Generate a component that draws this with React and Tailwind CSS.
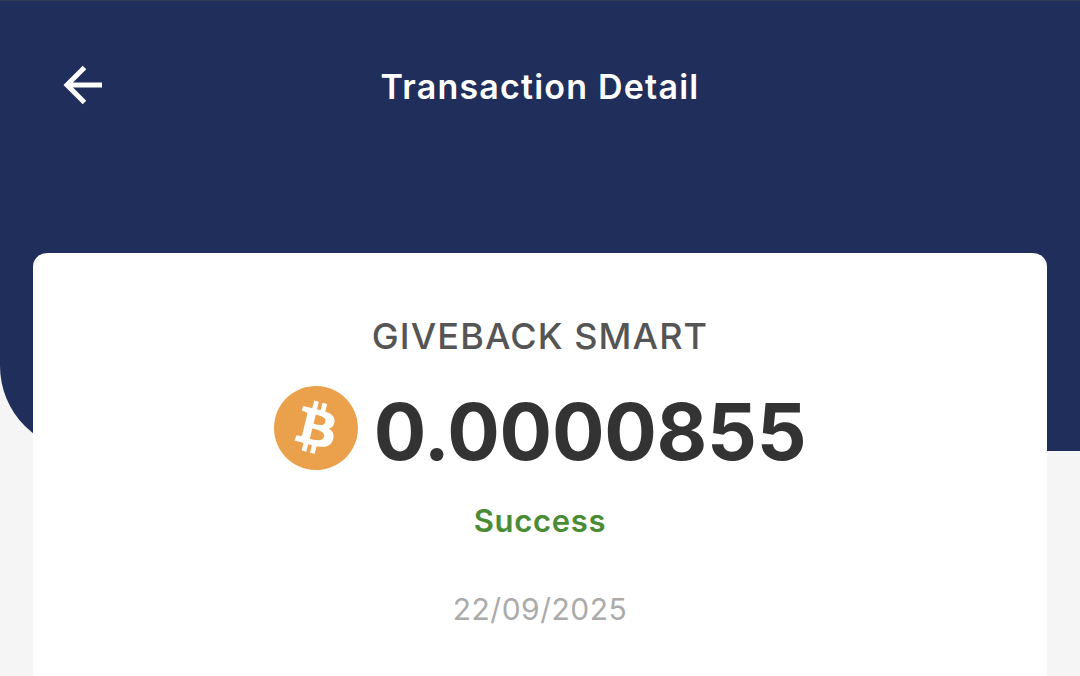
import React from 'react';
import { SiBitcoin } from 'react-icons/si';

function BackArrow() {
  return (
    <svg width="40" height="40" viewBox="0 0 40 40" fill="none" stroke="white" strokeWidth="5">
      <path d="M39 20H4" />
      <path d="M21.5 2.5L4 20L21.5 37.5" />
    </svg>
  );
}

export default function App() {
  return (
    <div className="h-[676px] overflow-hidden bg-[#f5f5f5] font-['Inter',sans-serif]">
      {/* Header */}
      <div className="h-[451px] rounded-bl-[85px] bg-[#202e5b] border-t border-[#2d3853]">
        <div className="flex items-start px-[63px] pt-[64px]">
          <BackArrow />
          <h1 className="flex-1 -ml-[40px] mt-[1px] text-center text-[34px] leading-[42px] font-semibold tracking-[1.2px] text-white">
            Transaction Detail
          </h1>
        </div>
      </div>

      {/* Card */}
      <div className="mx-[33px] -mt-[198px] relative h-[500px] rounded-t-[14px] bg-white pt-[61px] flex flex-col items-center">
        <div className="text-[36px] leading-[44px] font-medium tracking-[1.1px] text-[#555555]">GIVEBACK SMART</div>
        <div className="mt-[28px] flex items-start gap-[16px]">
          <SiBitcoin className="w-[84px] h-[84px] text-[#eba14c]" />
          <span className="mt-[-2px] text-[78px] leading-[96px] font-bold tracking-[-0.25px] text-[#333333]">0.0000855</span>
        </div>
        <div className="mt-[21px] text-[31px] leading-[40px] font-semibold tracking-[0.7px] text-[#4a8b35]">Success</div>
        <div className="mt-[48px] text-[30px] leading-[40px] tracking-[0.5px] text-[#ababab]">22/09/2025</div>
      </div>
    </div>
  );
}
